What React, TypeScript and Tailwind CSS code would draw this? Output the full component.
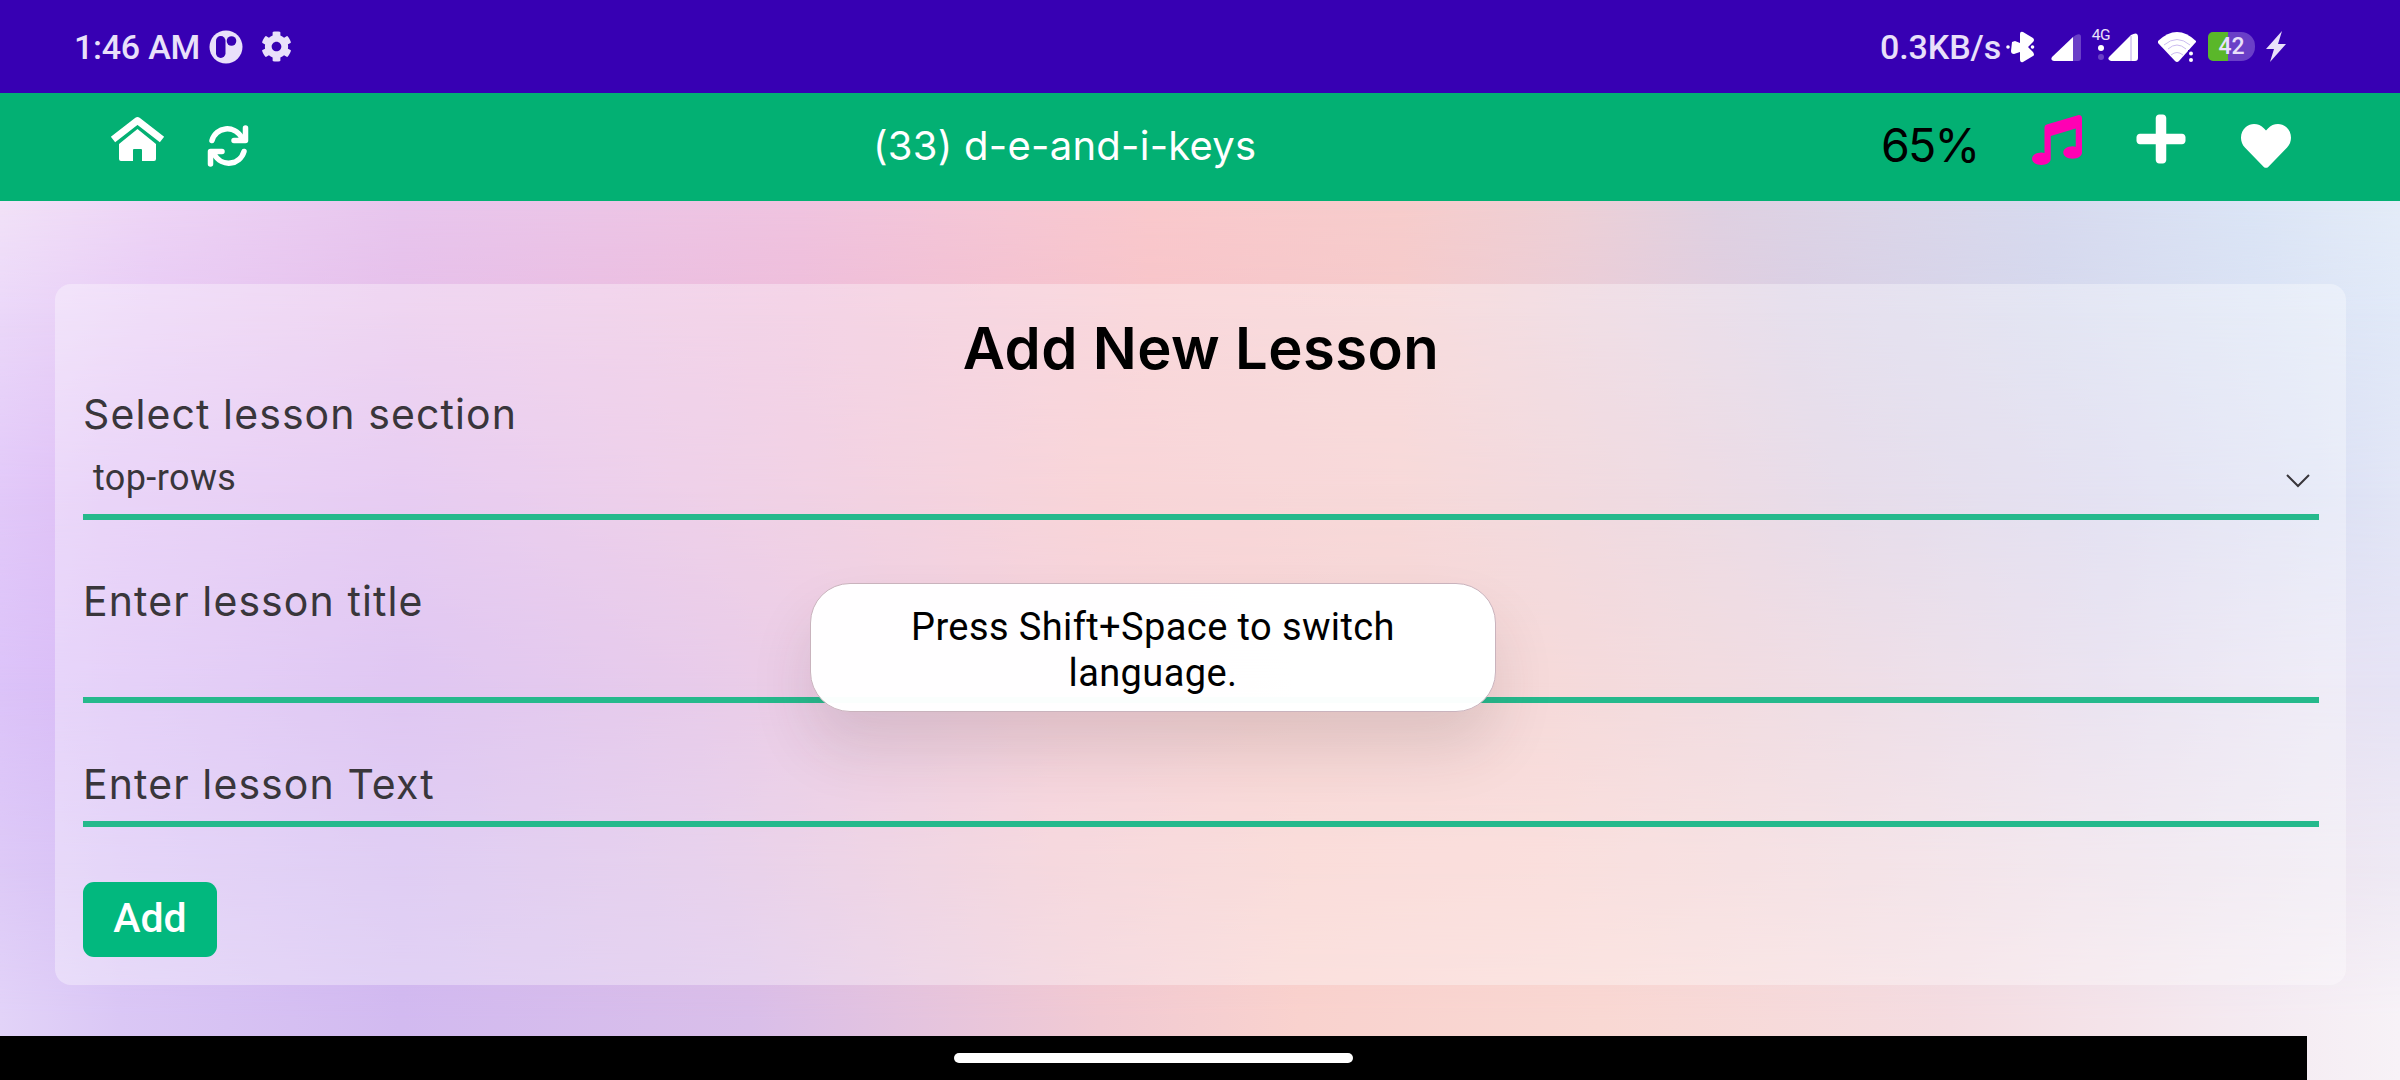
import { FaHeart, FaMusic, FaPlus, FaCog } from "react-icons/fa";

function Backdrop() {
  return (
    <div className="absolute inset-0 overflow-hidden">
      <div className="absolute inset-0 bg-[linear-gradient(90deg,#f2e2f8_0px,#eed5f6_150px,#e8c6ee_400px,#f0c4e0_800px,#fac9cd_1150px,#f7cdcc_1400px,#eed0d6_1570px,#dfd1e2_1720px,#d7daef_2050px,#dbe5f6_2250px,#e4ecf8_2400px)]" />
      <div className="absolute inset-0 bg-[linear-gradient(90deg,#ebd8f9_0px,#e8cbf5_150px,#e6bfea_400px,#eebdda_800px,#f7c4c9_1150px,#f5cacb_1400px,#e9cdd9_1600px,#dacfe4_1800px,#d5d8ed_2050px,#dae2f4_2250px,#e1e9f8_2400px)] [mask-image:linear-gradient(180deg,transparent_0px,black_110px)]" />
      <div className="absolute inset-0 bg-[linear-gradient(90deg,#e2c9f9_0px,#dfbff5_100px,#dbb2ec_400px,#e8b9da_750px,#f5bfc4_1100px,#f3c5c5_1400px,#e7c8d3_1650px,#dacbe0_1850px,#d6d3ec_2100px,#dbe0f4_2320px,#e2e6f6_2400px)] [mask-image:linear-gradient(180deg,transparent_110px,black_290px)]" />
      <div className="absolute inset-0 bg-[linear-gradient(90deg,#dcc3f9_0px,#d8b9f5_120px,#cfa9ec_400px,#dcb0df_700px,#f0bbca_1050px,#f3bfbf_1250px,#f1c6c6_1550px,#e6ccd9_1850px,#dfd5ea_2100px,#e6e2f3_2320px,#e6e3f5_2400px)] [mask-image:linear-gradient(180deg,transparent_290px,black_480px)]" />
      <div className="absolute inset-0 bg-[linear-gradient(90deg,#ddc9f7_0px,#d7bff5_120px,#cfb3ee_400px,#dbb9e3_700px,#f1c4cd_1050px,#f7cbc7_1300px,#f7cecb_1550px,#efd4da_1850px,#ebdeea_2150px,#eee9f4_2400px)] [mask-image:linear-gradient(180deg,transparent_480px,black_660px)]" />
      <div className="absolute inset-0 bg-[linear-gradient(90deg,#e2d3f8_0px,#dac7f5_120px,#d2baf0_400px,#d9bee9_750px,#f1cad3_1100px,#f9d2ce_1300px,#f9d8d3_1600px,#f4dce1_1950px,#f4eaf1_2250px,#f7f2f7_2400px)] [mask-image:linear-gradient(180deg,transparent_660px,black_820px)]" />
    </div>
  );
}

function StatusBar() {
  return (
    <div className="flex h-[93px] shrink-0 items-center justify-between bg-[#3700b3] pl-[74px] pr-[114px] font-[Roboto,sans-serif] text-[#e9e0fa]">
      <div className="flex items-center">
        <span className="w-[126px] whitespace-nowrap text-[34px] font-medium leading-none tracking-[-0.25px]">1:46 AM</span>
        <svg className="ml-[9px] h-[34px] w-[34px]" viewBox="0 0 34 34">
          <circle cx="17" cy="17" r="16.5" fill="#e9e0fa" />
          <rect x="7" y="6" width="9.5" height="22" rx="4.7" fill="#3700b3" />
          <circle cx="22.500" cy="11" r="4.8" fill="#3700b3" />
        </svg>
        <FaCog className="ml-[18px] size-[31px]" />
      </div>
      <div className="flex items-center">
        <span className="w-[120px] whitespace-nowrap text-[34px] font-medium leading-none tracking-[-0.1px]">0.3KB/s</span>
        <svg className="ml-[6px] h-[34px] w-[30px]" viewBox="0 0 30 34">
          <path d="M6 12 9 11 14 13V4Q14 1 17 2L27 8Q29 10 27 12L22 17 27 22Q29 25 27 26L17 32Q14 33 14 29V22L8 24Q5 24 5 21Z" fill="#fff" />
          <circle cx="2" cy="17" r="1.8" fill="#fff" />
          <circle cx="26.500" cy="17" r="1.8" fill="#fff" />
        </svg>
        <svg className="ml-[14px] h-[30px] w-[32px]" viewBox="0 0 32 30">
          <path d="M23 5 26 3Q31 1 31 5V26Q31 29 28 29H23Z" fill="#6a3fc7" />
          <path d="M23 5V29H4Q0 28 2 25Z" fill="#fff" />
        </svg>
        <div className="ml-[9px] flex h-[36px] w-[20px] flex-col items-center">
          <span className="h-[14px] text-[15.5px] leading-[13px] tracking-[-0.5px]">4G</span>
          <span className="mt-[2px] size-[6px] shrink-0 rounded-full bg-white" />
          <span className="mt-[3px] size-[6px] shrink-0 rounded-full bg-[#6a3fc7]" />
        </div>
        <svg className="-ml-[4px] mr-px h-[30px] w-[32px]" viewBox="0 0 32 30">
          <path d="M2 25 24 3Q31-1 31 5V26Q31 29 28 29H4Q0 28 2 25Z" fill="#fff" />
          <path d="M24 4V29" stroke="#b9a6e6" strokeWidth="1" />
        </svg>
        <svg className="ml-[17px] h-[32px] w-[40px]" viewBox="0 0 40 32">
          <path d="M1 10Q20-8 39 10L39 11 22 30Q20 32 18 30L1 12Z" fill="#fff" />
          <g fill="none" stroke="#cbbcf0" strokeWidth="1">
            <path d="M7 14Q20 3 33 14" />
            <path d="M11 18Q20 10 29 18" />
            <path d="M14 24Q20 19 26 24" />
          </g>
          <rect x="31" y="19" width="9" height="13" fill="#3700b3" />
          <circle cx="34" cy="22.500" r="2" fill="#fff" />
          <circle cx="34" cy="29" r="2" fill="#fff" />
        </svg>
        <div className="ml-[11px] flex h-[29px] w-[47px] items-center justify-center rounded-l-[5px] rounded-r-[14px] bg-[linear-gradient(90deg,#5ab72a_20px,#6a3fc7_20px)] text-[23px] font-medium leading-none">42</div>
        <svg className="ml-[11px] h-[31px] w-[20px]" viewBox="0 0 20 31">
          <path d="M16 0 0 18H8L4 31 20 13H12Z" fill="#e9e0fa" />
        </svg>
      </div>
    </div>
  );
}

function Header() {
  return (
    <header className="flex h-[108px] shrink-0 items-start bg-[#03b073] font-[Inter,sans-serif] text-white">
      <svg className="ml-[109px] mt-[22px] h-[46px] w-[58px] shrink-0" viewBox="0 0 58 46">
        <path d="M4 24.5 28.500 5.500 53 24.500" fill="none" stroke="#fff" strokeWidth="7" strokeLinejoin="round" />
        <path d="M28.500 14 47 29V44Q47 46 45 46H33V35Q33 34 32 34H25Q24 34 24 35V46H12Q10 46 10 44V29Z" fill="#fff" />
      </svg>
      <svg className="ml-[39px] mt-[32px] h-[42px] w-[44px] shrink-0" viewBox="0 0 44 42" fill="none" stroke="#fff" strokeWidth="5.500" strokeLinecap="round" strokeLinejoin="round">
        <path d="M6 15.500C10 2 28-1 36 13" />
        <path d="M39.500 3V15.500H28" />
        <path d="M38 26.500C34 40 16 43 8 29" />
        <path d="M4.500 39V26.500H16" />
      </svg>
      <div className="ml-[623px] mt-[29px] w-[390px] shrink-0 whitespace-nowrap text-[40px] leading-[48px] tracking-[0.25px]">(33) d-e-and-i-keys</div>
      <div className="ml-[618px] mt-[24px] w-[97px] shrink-0 whitespace-nowrap text-[46.5px] leading-[56px] tracking-[-1.8px] text-black">65%</div>
      <FaMusic className="ml-[54px] mt-[22px] size-[50px] shrink-0 text-[#ff00b3]" />
      <FaPlus className="ml-[53px] mt-[18px] h-[56px] w-[52px] shrink-0" />
      <FaHeart className="ml-[54px] mt-[28px] size-[50px] shrink-0" />
    </header>
  );
}

function Label({ children }: { children: string }) {
  return (
    <label className="block whitespace-nowrap font-[Inter,sans-serif] text-[41px] leading-[52px] tracking-[1.100px] text-[#39363b]">{children}</label>
  );
}

export default function App() {
  return (
    <div className="relative flex h-[1080px] w-[2400px] flex-col overflow-hidden">
      <StatusBar />
      <Header />
      <main className="relative flex grow flex-col">
        <Backdrop />
        <form className="relative ml-[55px] mt-[83px] flex h-[701px] w-[2291px] flex-col items-stretch rounded-[16px] bg-white/35 pl-[28px] pr-[27px] pt-[30px] font-[Roboto,sans-serif]">
          <h1 className="h-[74px] text-center font-[Inter,sans-serif] text-[58px] font-semibold leading-[68px] tracking-[0.4px] text-black">Add New Lesson</h1>
          <div className="h-[50px]">
            <Label>Select lesson section</Label>
          </div>
          <div className="flex h-[82px] items-center justify-between border-b-[6px] border-[#25b98c] pl-[10px] pr-[9px] pt-[3px]">
            <span className="text-[36px] leading-[42px] tracking-[0.4px] text-[#39363b]">top-rows</span>
            <svg className="mt-[6px] h-[14px] w-[24px]" viewBox="0 0 24 14" fill="none" stroke="#39363b" strokeWidth="2">
              <path d="M1 1 12 12 23 1" />
            </svg>
          </div>
          <div className="mt-[55px] h-[128px] border-b-[6px] border-[#25b98c]">
            <Label>Enter lesson title</Label>
          </div>
          <div className="mt-[55px] h-[69px] border-b-[6px] border-[#25b98c]">
            <Label>Enter lesson Text</Label>
          </div>
          <button type="button" className="mt-[55px] flex h-[75px] w-[134px] items-center justify-center rounded-[11px] bg-[#02b87e] pb-[2px] text-[41px] font-medium text-white">Add</button>
        </form>
        <div className="absolute left-[810px] top-[382px] flex h-[129px] w-[686px] items-center justify-center rounded-[40px] border border-[#c9b3bd] bg-white/98 text-center font-[Roboto,sans-serif] text-[38px] leading-[46px] tracking-[0.4px] text-black shadow-[0_36px_60px_rgba(60,50,50,0.13)]">
          <p className="w-[520px] pt-[4px]">Press Shift+Space to switch language.</p>
        </div>
        <div className="absolute bottom-0 left-0 flex h-[44px] w-[2307px] justify-center bg-black pt-[17px]">
          <div className="h-[10px] w-[399px] rounded-full bg-white" />
        </div>
      </main>
    </div>
  );
}
